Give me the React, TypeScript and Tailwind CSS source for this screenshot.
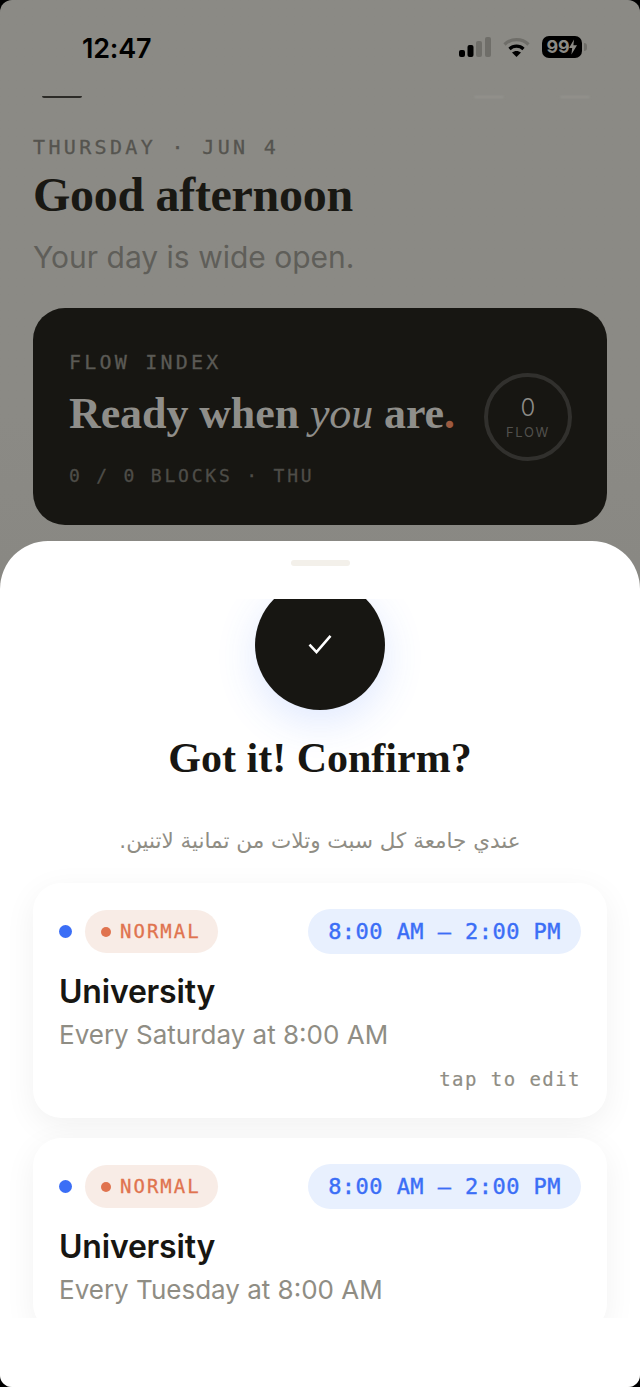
import React from 'react';

const serif = "font-['Liberation_Serif',serif]";
const mono = "font-['DejaVu_Sans_Mono',monospace]";
const sans = "font-['Inter',sans-serif]";

function StatusIcons() {
  return (
    <div className="flex items-center gap-[12px]">
      <svg width="32" height="20" viewBox="0 0 32 20">
        <rect x="0" y="13" width="6" height="7" rx="2" fill="#000" />
        <rect x="8.5" y="8" width="6" height="12" rx="2" fill="#000" />
        <rect x="17" y="4" width="6" height="16" rx="2" fill="#6f6e69" />
        <rect x="26" y="0" width="6" height="20" rx="2" fill="#6f6e69" />
      </svg>
      <svg width="27" height="20" viewBox="0 0 27 20" fill="none">
        <path d="M1.5 7.5C8 1 19 1 25.5 7.5" stroke="#6f6e69" strokeWidth="3.2" />
        <path d="M6.5 12C10.5 8.2 16.5 8.2 20.5 12" stroke="#000" strokeWidth="3.2" />
        <path d="M13.5 20L9 15.6C11.5 13.4 15.5 13.4 18 15.6Z" fill="#000" />
      </svg>
      <div className="flex items-center">
        <div className="flex h-[22px] w-[40px] items-center justify-center rounded-[7px] bg-black text-[#8b8a85]">
          <span className={`${sans} text-[18px] leading-none font-bold tracking-[-0.3px]`}>99</span>
          <svg width="8" height="16" viewBox="0 0 8 15" fill="currentColor">
            <path d="M5 0L0 8.5H3.2L2.4 15L8 5.8H4.4Z" />
          </svg>
        </div>
        <div className="ml-[2px] h-[8px] w-[3px] rounded-r-full bg-[#6f6e69]" />
      </div>
    </div>
  );
}

function FlowRing() {
  return (
    <div className="flex h-[88px] w-[88px] shrink-0 flex-col items-center justify-center rounded-full border-[4px] border-[#31302d]">
      <span className={`${sans} text-[24px] leading-[27px] font-light text-[#8d8c88]`}>0</span>
      <span className={`${sans} mt-[3px] text-[13px] leading-[16px] tracking-[1.7px] text-[#52514d]`}>FLOW</span>
    </div>
  );
}

function Backdrop() {
  return (
    <div className="h-full bg-gradient-to-b from-[#8b8a85] from-30% to-[#7e7d78]">
      <div className="flex h-[96px] items-start justify-between pt-[33px] pr-[53px] pl-[82px]">
        <span className={`${sans} text-[27px] leading-[32px] font-semibold tracking-[-0.2px] text-black`}>12:47</span>
        <div className="mt-[3px]">
          <StatusIcons />
        </div>
      </div>
      {/* scrolled header, only a sliver still shows under the status bar */}
      <div className="flex h-[2px] items-start justify-between pr-[50px] pl-[42px]">
        <div className="h-[2px] w-[40px] rounded-b-full bg-[#2c2b27]" />
        <div className="flex gap-[56px]">
          <div className="h-[2px] w-[30px] rounded-b-full bg-[#95948f] blur-[1px]" />
          <div className="h-[2px] w-[30px] rounded-b-full bg-[#95948f] blur-[1px]" />
        </div>
      </div>
      <div className="px-[33px] pt-[36px]">
        <p className={`${mono} text-[20px] leading-[26px] tracking-[3.35px] text-[#55544f] [-webkit-text-stroke:0.3px]`}>THURSDAY · JUN 4</p>
        <h1 className={`${serif} mt-[8px] text-[48px] leading-[54px] font-bold tracking-[-0.3px] text-[#191813]`}>Good afternoon</h1>
        <p className={`${sans} mt-[17px] text-[30px] leading-[36px] text-[#5f5e59]`}>Your day is wide open.</p>
        <div className="mt-[33px] flex h-[217px] items-center justify-between rounded-[32px] bg-[#171612] pr-[35px] pl-[36px]">
          <div className="mt-[4px]">
            <p className={`${mono} text-[20px] leading-[26px] tracking-[3.2px] text-[#5b5a55] [-webkit-text-stroke:0.3px]`}>FLOW INDEX</p>
            <p className={`${serif} mt-[14px] text-[44px] leading-[50px] font-bold tracking-[-0.1px] whitespace-nowrap text-[#8f8e8a]`}>
              Ready when <em className="font-normal">you</em> are<span className="text-[#9c5a3f]">.</span>
            </p>
            <p className={`${mono} mt-[25px] text-[18px] leading-[24px] tracking-[2.8px] text-[#4e4d48] [-webkit-text-stroke:0.3px]`}>0 / 0 BLOCKS · THU</p>
          </div>
          <FlowRing />
        </div>
      </div>
    </div>
  );
}

function EventCard({ when, showEdit }: { when: string; showEdit: boolean }) {
  return (
    <div className="rounded-[28px] bg-white px-[26px] pt-[26px] pb-[26px] shadow-[0_8px_32px_rgba(0,0,0,0.06)]">
      <div className="flex items-center justify-between">
        <div className="flex items-center gap-[13px]">
          <span className="h-[13px] w-[13px] rounded-full bg-[#3b6ef6]" />
          <span className="flex h-[43px] items-center gap-[9px] rounded-full bg-[#f8ece6] pr-[17px] pl-[16px]">
            <span className="h-[10px] w-[10px] rounded-full bg-[#e0734f]" />
            <span className={`${mono} text-[19px] leading-none tracking-[2px] text-[#e0734f] [-webkit-text-stroke:0.3px]`}>NORMAL</span>
          </span>
        </div>
        <span className={`${mono} flex h-[45px] items-center rounded-full bg-[#e8f0fe] px-[20px] text-[22px] leading-none tracking-[0.45px] text-[#3b6ef6] [-webkit-text-stroke:0.4px]`}>8:00 AM – 2:00 PM</span>
      </div>
      <h2 className={`${sans} mt-[16px] text-[32px] leading-[44px] font-semibold tracking-[-0.2px] text-[#171612]`}>University</h2>
      <p className={`${sans} mt-[5px] text-[26px] leading-[32px] text-[#8f8d84]`}>{when}</p>
      {showEdit && (
        <p className={`${mono} mt-[15px] text-right text-[19px] leading-[26px] tracking-[1.45px] text-[#8f8d84] [-webkit-text-stroke:0.2px]`}>tap to edit</p>
      )}
    </div>
  );
}

export default function App() {
  return (
    <div className="relative h-[1387px] w-[640px] overflow-hidden bg-black">
      <div className="h-full overflow-hidden rounded-[12px]">
        <Backdrop />
      </div>

      {/* Confirm sheet */}
      <div className="absolute inset-x-0 top-[541px] bottom-0 flex flex-col overflow-hidden rounded-t-[48px] rounded-b-[12px] bg-white">
        <div className="flex h-[58px] shrink-0 justify-center pt-[19px]">
          <div className="h-[6px] w-[59px] rounded-full bg-[#f3f0ea]" />
        </div>
        <div className="h-[719px] shrink-0 overflow-hidden px-[33px]">
          <div className="-mt-[19px] flex flex-col items-center">
            <div className="flex h-[130px] w-[130px] items-center justify-center rounded-full bg-[#171612] shadow-[0_12px_40px_rgba(59,110,246,0.16)]">
              <svg className="-mt-[2px]" width="28" height="28" viewBox="0 0 24 24" fill="none" stroke="#fff" strokeWidth="2.2">
                <path d="M3 12.5L9 19L21 5" />
              </svg>
            </div>
            <h3 className={`${serif} mt-[23px] text-[42px] leading-[50px] font-bold text-[#171612]`}>Got it! Confirm?</h3>
            <p dir="rtl" className="mt-[43px] font-['DejaVu_Sans',sans-serif] text-[21.5px] leading-[30px] text-[#8f8d84]">عندي جامعة كل سبت وتلات من تمانية لاتنين.</p>
          </div>
          <div className="mt-[27px] flex flex-col gap-[20px]">
            <EventCard when="Every Saturday at 8:00 AM" showEdit />
            <EventCard when="Every Tuesday at 8:00 AM" showEdit={false} />
          </div>
        </div>
      </div>
    </div>
  );
}
